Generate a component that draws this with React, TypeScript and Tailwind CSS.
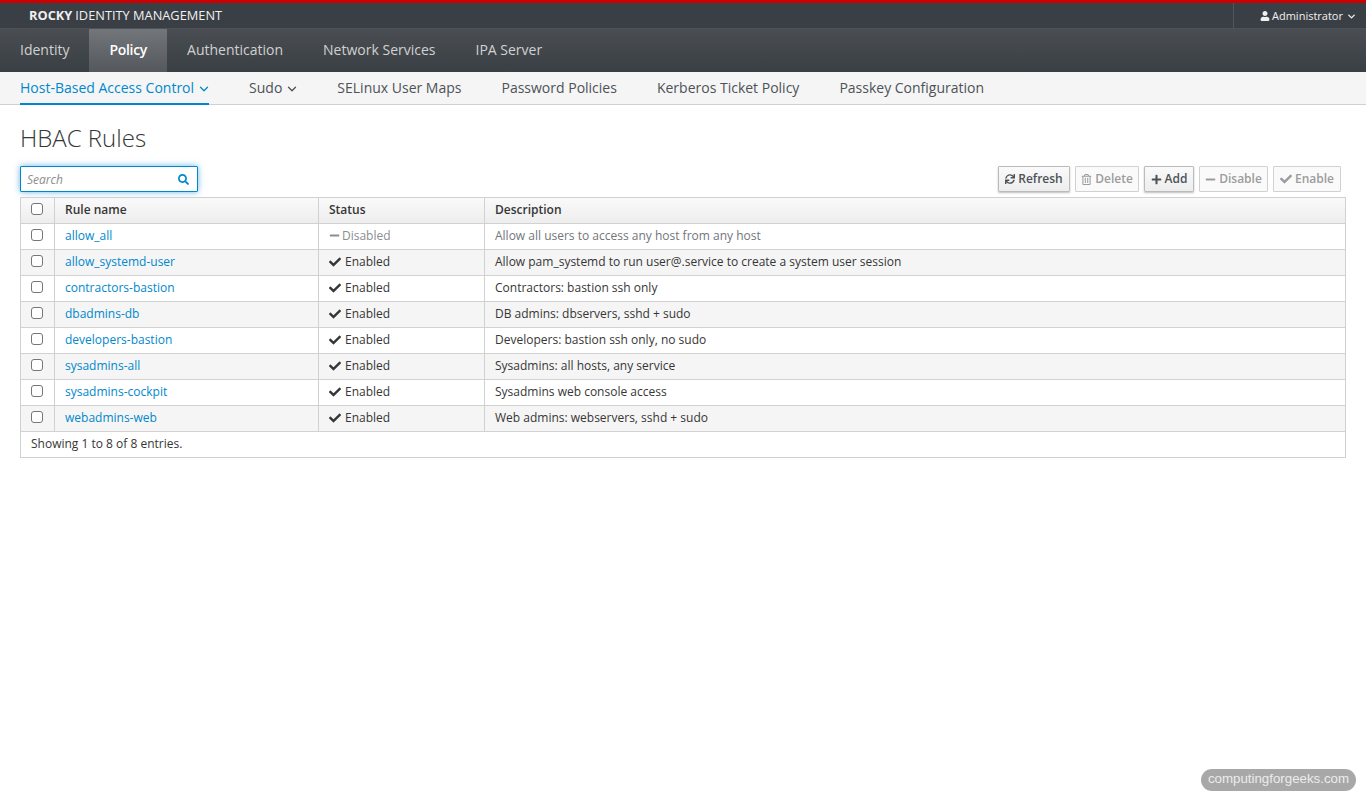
import { FaCheck, FaMinus, FaPlus, FaSearch, FaSync, FaUser, FaRegTrashAlt } from "react-icons/fa";
import { FiChevronDown } from "react-icons/fi";

const navItems = ["Identity", "Policy", "Authentication", "Network Services", "IPA Server"];

const subItems = [
  { label: "Host-Based Access Control", caret: true, active: true },
  { label: "Sudo", caret: true },
  { label: "SELinux User Maps" },
  { label: "Password Policies" },
  { label: "Kerberos Ticket Policy" },
  { label: "Passkey Configuration" },
];

const rules = [
  { name: "allow_all", enabled: false, description: "Allow all users to access any host from any host" },
  { name: "allow_systemd-user", enabled: true, description: "Allow pam_systemd to run user@.service to create a system user session" },
  { name: "contractors-bastion", enabled: true, description: "Contractors: bastion ssh only" },
  { name: "dbadmins-db", enabled: true, description: "DB admins: dbservers, sshd + sudo" },
  { name: "developers-bastion", enabled: true, description: "Developers: bastion ssh only, no sudo" },
  { name: "sysadmins-all", enabled: true, description: "Sysadmins: all hosts, any service" },
  { name: "sysadmins-cockpit", enabled: true, description: "Sysadmins web console access" },
  { name: "webadmins-web", enabled: true, description: "Web admins: webservers, sshd + sudo" },
];

function Checkbox() {
  return <span className="block h-[12px] w-[12px] rounded-[3px] border border-[#767676] bg-white" />;
}

function ToolButton({ icon, label, disabled, width }: { icon: React.ReactNode; label: string; disabled?: boolean; width: string }) {
  return (
    <button
      className={`flex h-[26px] items-center justify-center gap-[3px] rounded-[1px] border text-[12px] font-semibold ${width} ${
        disabled
          ? "border-[#d1d1d1] bg-[#fafafa] text-[#9c9c9c]"
          : "border-[#bbbbbb] bg-gradient-to-b from-[#fafafa] to-[#ededed] text-[#4d5258] shadow-[0_1px_2px_rgba(0,0,0,0.25)]"
      }`}
    >
      {icon}
      {label}
    </button>
  );
}

export default function App() {
  return (
    <div className="h-[800px] w-[1366px] overflow-hidden bg-white font-['Open_Sans',sans-serif] text-[12px] text-[#363636]">
      {/* Masthead */}
      <div className="flex h-[29px] items-stretch justify-between border-t-[3px] border-b border-t-[#cc0000] border-b-[#4d5258] bg-[#3a3f46]">
        <div className="flex items-center pt-[1px] pl-[29px] text-[12.8px] text-[#f0f0f0]">
          <span className="font-bold">ROCKY</span>
          <span className="ml-[3px]">IDENTITY MANAGEMENT</span>
        </div>
        <div className="flex w-[133px] items-center gap-[2px] border-l border-[#53575d] pt-[1px] pl-[26px] text-[#f0f0f0]">
          <FaUser className="h-[10px] w-[10px]" />
          <span className="text-[11px]">Administrator</span>
          <FiChevronDown className="ml-[1px] h-[11px] w-[11px]" strokeWidth={3} />
        </div>
      </div>

      {/* Primary nav */}
      <div className="flex h-[43px] bg-gradient-to-b from-[#4a4e52] to-[#393f44]">
        {navItems.map((item) => (
          <div
            key={item}
            className={`flex items-center px-[20px] pb-[2px] text-[14px] ${
              item === "Policy"
                ? "bg-gradient-to-b from-[#73767b] to-[#54575b] font-semibold tracking-[-0.3px] text-white"
                : "text-[#d1d1d1]"
            }`}
          >
            {item}
          </div>
        ))}
      </div>

      {/* Secondary nav */}
      <div className="flex h-[33px] gap-[40px] border-b border-[#d1d1d1] bg-[#f5f5f5] px-[20px]">
        {subItems.map((item) => (
          <div
            key={item.label}
            className={`flex h-[33px] items-center gap-[3px] border-b-2 text-[14px] ${
              item.active ? "border-[#0088ce] text-[#0088ce]" : "border-transparent text-[#4d5258]"
            }`}
          >
            {item.label}
            {item.caret && <FiChevronDown className="-mr-[2px] mt-[2px] h-[14px] w-[14px]" strokeWidth={2.25} />}
          </div>
        ))}
      </div>

      {/* Content */}
      <div className="px-[20px]">
        <h1 className="mt-[16px] h-[34px] text-[24px] leading-[34px] font-light text-[#363636]">HBAC Rules</h1>

        <div className="mt-[11px] flex h-[26px] items-center justify-between pr-[5px]">
          <div className="flex h-[26px] w-[178px] items-center justify-between rounded-[1px] border border-[#0088ce] pr-[8px] pl-[6px] shadow-[0_0_6px_rgba(0,136,206,0.6)]">
            <span className="pt-[1px] text-[12px] text-[#8b8d8f] italic">Search</span>
            <FaSearch className="h-[11px] w-[11px] text-[#0088ce]" />
          </div>
          <div className="flex gap-[5px]">
            <ToolButton width="w-[72px]" icon={<FaSync className="h-[10px] w-[10px]" />} label="Refresh" />
            <ToolButton width="w-[64px]" disabled icon={<FaRegTrashAlt className="h-[11px] w-[11px]" />} label="Delete" />
            <ToolButton width="w-[50px]" icon={<FaPlus className="h-[11px] w-[11px]" />} label="Add" />
            <ToolButton width="w-[69px]" disabled icon={<FaMinus className="h-[11px] w-[11px]" />} label="Disable" />
            <ToolButton width="w-[68px]" disabled icon={<FaCheck className="h-[12px] w-[12px]" />} label="Enable" />
          </div>
        </div>

        <table className="mt-[5px] w-[1326px] table-fixed border-collapse border border-[#d1d1d1] text-left">
          <thead>
            <tr className="h-[26px] bg-gradient-to-b from-[#fafafa] to-[#ededed] font-semibold">
              <th className="w-[34px] border border-[#d1d1d1] pb-[3px] pl-[10px] font-semibold"><Checkbox /></th>
              <th className="w-[264px] border border-[#d1d1d1] px-[10px] pb-[2px] font-semibold">Rule name</th>
              <th className="w-[166px] border border-[#d1d1d1] px-[10px] pb-[2px] font-semibold">Status</th>
              <th className="border border-[#d1d1d1] px-[10px] pb-[2px] font-semibold">Description</th>
            </tr>
          </thead>
          <tbody>
            {rules.map((r, i) => (
              <tr key={r.name} className={`h-[26px] ${i % 2 === 1 ? "bg-[#f5f5f5]" : "bg-white"}`}>
                <td className="border border-[#d1d1d1] pb-[3px] pl-[10px]"><Checkbox /></td>
                <td className="border border-[#d1d1d1] px-[10px] pb-[2px] text-[#0088ce]">{r.name}</td>
                <td className={`border border-[#d1d1d1] px-[10px] pb-[2px] ${r.enabled ? "" : "text-[#8b8d8f]"}`}>
                  {r.enabled ? (
                    <span className="flex items-center gap-[4px]"><FaCheck className="h-[12px] w-[12px]" />Enabled</span>
                  ) : (
                    <span className="flex items-center gap-[2px]"><FaMinus className="h-[11px] w-[11px]" />Disabled</span>
                  )}
                </td>
                <td className={`border border-[#d1d1d1] px-[10px] pb-[2px] ${r.enabled ? "" : "text-[#72767b]"}`}>{r.description}</td>
              </tr>
            ))}
            <tr className="h-[26px]">
              <td colSpan={4} className="border border-[#d1d1d1] px-[10px] pb-[2px]">Showing 1 to 8 of 8 entries.</td>
            </tr>
          </tbody>
        </table>
      </div>

      {/* Watermark */}
      <div className="absolute top-[769px] left-[1201px] flex h-[22px] w-[155px] items-center justify-center rounded-full bg-[#a8a8a8] pb-[2px] font-['Liberation_Sans',sans-serif] text-[13.3px] text-[#ececec]">
        computingforgeeks.com
      </div>
    </div>
  );
}
